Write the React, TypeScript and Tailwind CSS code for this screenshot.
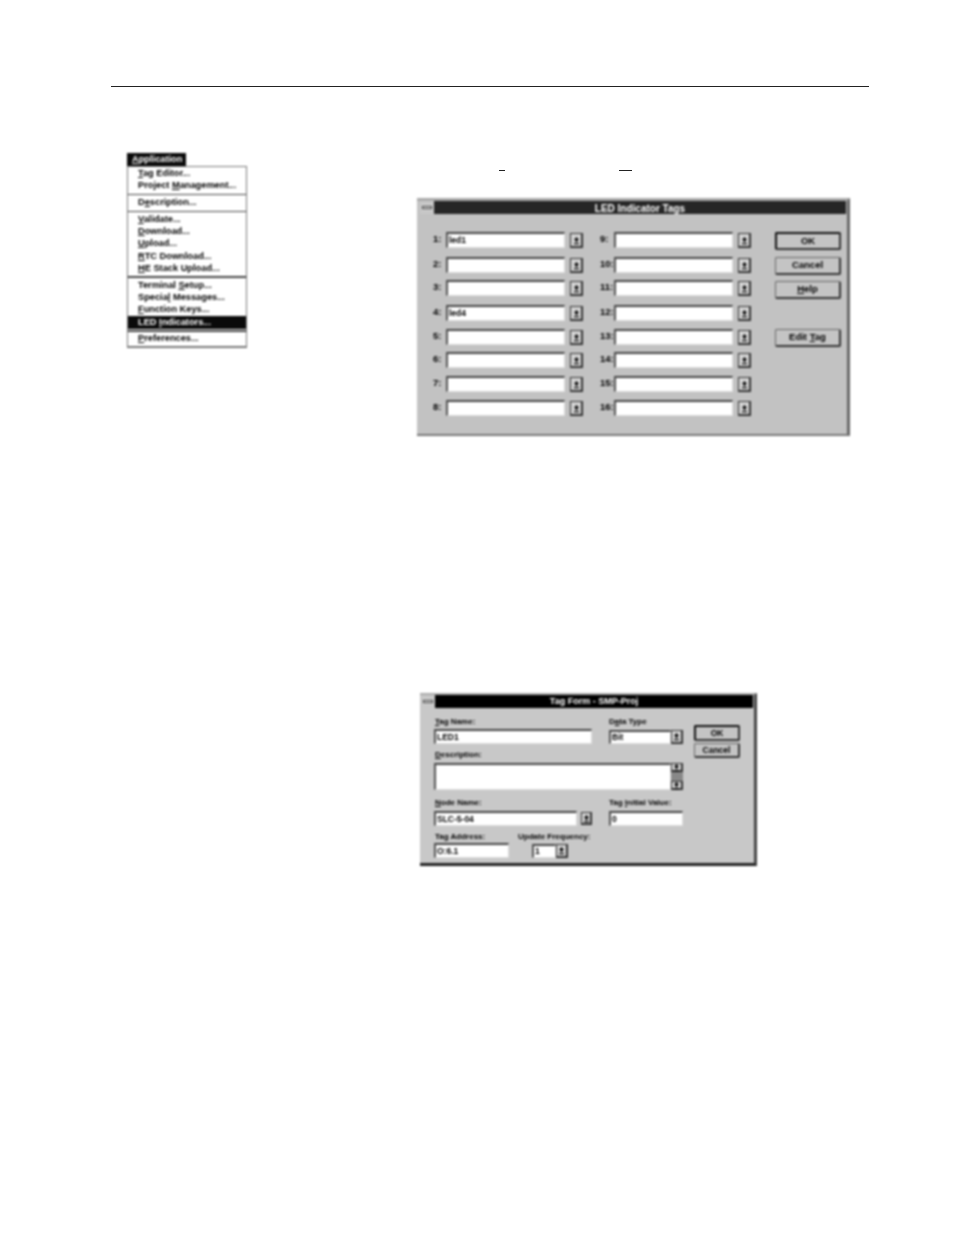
import React from 'react';

const sans = 'font-["Liberation_Sans",Arial,sans-serif]';

// small combo / spin arrow button from the Win 3.1 dialogs
function Spin({ className = '' }: { className?: string }) {
  return (
    <div className={`flex items-center justify-center border border-[#333] border-r-2 border-b-2 bg-[#d4d4d4] ${className}`}>
      <svg width="7" height="9" viewBox="0 0 7 9">
        <path d="M3.5 1 L6 4 H4.5 V6 H2.5 V4 H1 Z" fill="#000" />
        <rect x="1" y="7" width="5" height="1.2" fill="#000" />
      </svg>
    </div>
  );
}

function Field({ value, className = '' }: { value?: string; className?: string }) {
  return (
    <div className={`flex items-center border-t-2 border-l-2 border-t-[#444] border-l-[#555] border-b border-r border-b-[#ddd] border-r-[#ddd] bg-white pl-[1px] text-[8.5px] font-bold text-black ${className}`}>
      {value}
    </div>
  );
}

function Win31Button({ children, isDefault, className = '' }: { children: React.ReactNode; isDefault?: boolean; className?: string }) {
  return (
    <div className={`flex items-center justify-center rounded-[2px] border bg-[#c4c4c4] border-b-2 border-r-2 border-r-[#333] border-b-[#333] text-black font-bold ${isDefault ? 'border-2 border-[#111]' : 'border-[#666]'} ${className}`}>
      <span>{children}</span>
    </div>
  );
}

function TitleBar({ title, barClass }: { title: string; barClass: string }) {
  return (
    <div className="flex h-[13px]">
      <div className="flex w-[14px] items-center justify-center bg-[#c8c8c8]">
        <div className="h-[3px] w-[10px] border border-[#444] bg-[#eee]" />
      </div>
      <div className={`flex flex-1 items-center justify-center pt-[1px] font-bold text-white ${barClass}`}>{title}</div>
    </div>
  );
}

function Menu() {
  const Item = ({ children, active }: { children: React.ReactNode; active?: boolean }) => (
    <div className={`flex h-[12.25px] items-center whitespace-nowrap pl-[10px] ${active ? 'bg-[#0a0a0a] text-white' : 'text-black'}`}>
      <span>{children}</span>
    </div>
  );
  const Sep = () => <div className="my-[1.6px] h-[1.5px] bg-[#444]" />;
  return (
    <div className="mt-[66px] w-[120px] text-[9.25px] font-bold blur-[0.8px]">
      <div className="flex h-[13px] w-[59px] items-center bg-[#0a0a0a] pl-[5px] text-white"><span><u>A</u>pplication</span></div>
      <div className="border border-[#777] border-b-2 bg-white pt-[0.5px]">
        <Item><u>T</u>ag Editor...</Item>
        <Item>Project <u>M</u>anagement...</Item>
        <Sep />
        <Item>D<u>e</u>scription...</Item>
        <Sep />
        <Item><u>V</u>alidate...</Item>
        <Item><u>D</u>ownload...</Item>
        <Item><u>U</u>pload...</Item>
        <Item><u>R</u>TC Download...</Item>
        <Item><u>H</u>E Stack Upload...</Item>
        <Sep />
        <Item>Terminal <u>S</u>etup...</Item>
        <Item>Specia<u>l</u> Messages...</Item>
        <Item><u>F</u>unction Keys...</Item>
        <Item active>LED <u>I</u>ndicators...</Item>
        <Sep />
        <Item><u>P</u>references...</Item>
      </div>
    </div>
  );
}

const ledRows: { left: string; right: string; value?: string; h: string }[] = [
  { left: '1:', right: '9:', value: 'led1', h: 'h-[25px]' },
  { left: '2:', right: '10:', h: 'h-[23px]' },
  { left: '3:', right: '11:', h: 'h-[25px]' },
  { left: '4:', right: '12:', value: 'led4', h: 'h-[24px]' },
  { left: '5:', right: '13:', h: 'h-[23px]' },
  { left: '6:', right: '14:', h: 'h-[24px]' },
  { left: '7:', right: '15:', h: 'h-[24px]' },
  { left: '8:', right: '16:', h: 'h-[24px]' },
];

function LedDialog() {
  return (
    <div className="mt-[27px] h-[238px] w-[433px] border-t-[3px] border-r-[3px] border-b-2 border-t-[#aaa] border-r-[#666] border-b-[#777] bg-[#c2c2c2] text-[9.5px] blur-[0.8px]">
      <div className="pl-[3px] pr-[1px] text-[10px]">
        <TitleBar title="LED Indicator Tags" barClass="bg-[#262626]" />
      </div>
      <div className="flex pt-[18px]">
        <div className="w-[358px]">
          {ledRows.map(row => (
            <div key={row.left} className={`flex items-start font-bold text-black ${row.h}`}>
              <div className="w-[29px] pl-[16px]">{row.left}</div>
              <Field value={row.value} className="h-[16px] w-[119px]" />
              <Spin className="ml-[5px] mt-[1px] h-[15px] w-[13px]" />
              <div className="w-[31px] pl-[17px] whitespace-nowrap">{row.right}</div>
              <Field className="h-[16px] w-[119px]" />
              <Spin className="ml-[5px] mt-[1px] h-[15px] w-[13px]" />
            </div>
          ))}
        </div>
        <div className="flex w-[66px] flex-col">
          <Win31Button isDefault className="h-[18px]">OK</Win31Button>
          <Win31Button className="mt-[7px] h-[18px]">Cancel</Win31Button>
          <Win31Button className="mt-[6px] h-[18px]"><u>H</u>elp</Win31Button>
          <Win31Button className="mt-[30px] h-[18px]">Edit <u>T</u>ag</Win31Button>
        </div>
      </div>
    </div>
  );
}

function TagDialog() {
  const Label = ({ children, className = '' }: { children: React.ReactNode; className?: string }) => (
    <div className={`whitespace-nowrap text-[8px] font-bold leading-[10px] text-black ${className}`}>{children}</div>
  );
  return (
    <div className="ml-[3px] mt-[257px] h-[173px] w-[337px] border-t-2 border-r-[3px] border-b-[3px] border-t-[#aaa] border-r-[#444] border-b-[#222] bg-[#c8c8c8] blur-[0.8px]">
      <div className="pl-[1px] pr-[1px] text-[9px]">
        <TitleBar title="Tag Form - SMP-Proj" barClass="bg-black" />
      </div>
      <div className="flex pl-[14px] pt-[9px]">
        <div className="w-[249px]">
          <div className="flex">
            <div>
              <Label className="ml-[1px]"><u>T</u>ag Name:</Label>
              <Field value="LED1" className="mt-[2px] h-[15px] w-[158px]" />
            </div>
            <div className="ml-[17px]">
              <Label>D<u>a</u>ta Type</Label>
              <div className="mt-[3px] flex">
                <Field value="Bit" className="h-[14px] w-[62px]" />
                <Spin className="h-[14px] w-[12px]" />
              </div>
            </div>
          </div>
          <Label className="ml-[1px] mt-[6px]"><u>D</u>escription:</Label>
          <div className="mt-[3px] flex h-[27px]">
            <Field className="h-full w-[237px]" />
            <div className="flex w-[12px] flex-col">
              <Spin className="h-[9px] w-full" />
              <div className="flex-1 bg-[#888]" />
              <Spin className="h-[9px] w-full" />
            </div>
          </div>
          <div className="mt-[8px] flex">
            <div>
              <Label className="ml-[1px]"><u>N</u>ode Name:</Label>
              <div className="mt-[3px] flex">
                <Field value="SLC-5-04" className="h-[15px] w-[143px]" />
                <Spin className="ml-[4px] mt-[1px] h-[13px] w-[11px]" />
              </div>
            </div>
            <div className="ml-[17px]">
              <Label>Tag <u>I</u>nitial Value:</Label>
              <Field value="0" className="mt-[3px] h-[15px] w-[74px]" />
            </div>
          </div>
          <div className="mt-[6px] flex">
            <div>
              <Label className="ml-[1px]">Tag Address:</Label>
              <Field value="O:6.1" className="mt-[1px] h-[15px] w-[75px]" />
            </div>
            <div className="ml-[9px]">
              <Label>Update Frequency:</Label>
              <div className="ml-[14px] mt-[2px] flex">
                <Field value="1" className="h-[14px] w-[24px]" />
                <Spin className="h-[14px] w-[12px]" />
              </div>
            </div>
          </div>
        </div>
        <div className="ml-[11px] flex w-[46px] flex-col text-[8.5px]">
          <Win31Button isDefault className="mt-[8px] h-[16px]">OK</Win31Button>
          <Win31Button className="mt-[2px] h-[15px]">Cancel</Win31Button>
        </div>
      </div>
    </div>
  );
}

export default function App() {
  return (
    <div className={`min-h-[1235px] bg-white pt-[86px] ${sans}`}>
      <div className="ml-[111px] h-px w-[758px] bg-[#222]" />
      <div className="flex items-start pl-[127px]">
        <Menu />
        <div className="ml-[170px] w-[433px]">
          <div className="mt-[83px] flex">
            <div className="ml-[82px] h-px w-[6px] bg-[#222]" />
            <div className="ml-[114px] h-px w-[13px] bg-[#222]" />
          </div>
          <LedDialog />
          <TagDialog />
        </div>
      </div>
    </div>
  );
}
